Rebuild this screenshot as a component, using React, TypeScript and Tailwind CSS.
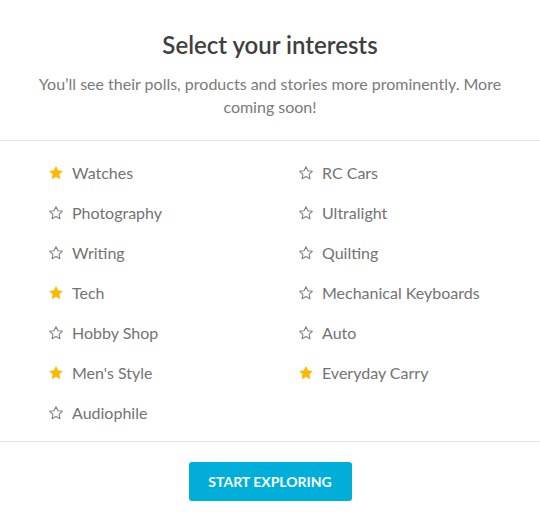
import React from "react";

const interests = [
  { name: "Watches", selected: true },
  { name: "RC Cars", selected: false },
  { name: "Photography", selected: false },
  { name: "Ultralight", selected: false },
  { name: "Writing", selected: false },
  { name: "Quilting", selected: false },
  { name: "Tech", selected: true },
  { name: "Mechanical Keyboards", selected: false },
  { name: "Hobby Shop", selected: false },
  { name: "Auto", selected: false },
  { name: "Men's Style", selected: true },
  { name: "Everyday Carry", selected: true },
  { name: "Audiophile", selected: false },
];

const Star: React.FC<{ filled: boolean }> = ({ filled }) => (
  <svg width="16" height="16" viewBox="0 0 24 24" className="shrink-0">
    <path
      d="M12 2.5l2.9 6.1 6.6.8-4.9 4.6 1.3 6.6L12 17.3l-5.9 3.3 1.3-6.6-4.9-4.6 6.6-.8z"
      fill={filled ? "#fbb800" : "none"}
      stroke={filled ? "#fbb800" : "#808080"}
      strokeWidth={filled ? 1 : 1.6}
      strokeLinejoin="round"
    />
  </svg>
);

const App: React.FC = () => {
  return (
    <div
      className="w-[540px] h-[521px] bg-white flex flex-col"
      style={{ fontFamily: "Lato, 'Open Sans', sans-serif" }}
    >
      {/* Header */}
      <div className="pt-[30px] pb-[22px] px-6 text-center border-b border-[#e3e3e3]">
        <h1 className="text-[24px] leading-[30px] font-semibold text-[#404040]">
          Select your interests
        </h1>
        <p className="mt-[12px] text-[16px] leading-[23px] text-[#7a7a7a]">
          You’ll see their polls, products and stories more prominently. More
          coming soon!
        </p>
      </div>

      {/* Interests */}
      <div className="grid grid-cols-[250px_1fr] pl-[48px] pt-[12px] pb-[8px] border-b border-[#e3e3e3]">
        {interests.map((item) => (
          <div key={item.name} className="h-10 flex items-center gap-[8px]">
            <Star filled={item.selected} />
            <span className="text-[16px] text-[#737373]">{item.name}</span>
          </div>
        ))}
      </div>

      {/* Footer */}
      <div className="flex justify-center pt-[20px]">
        <button className="w-[163px] h-[39px] rounded-[3px] bg-[#00afd9] text-white text-[14px] font-bold uppercase">
          Start Exploring
        </button>
      </div>
    </div>
  );
};

export default App;
